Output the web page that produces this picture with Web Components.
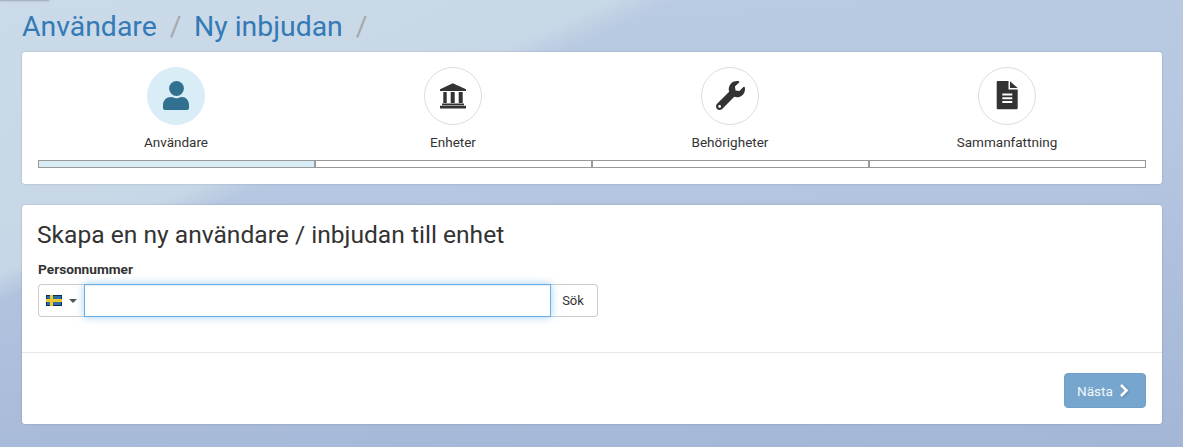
<!DOCTYPE html>
<html lang="sv">
<head>
<meta charset="utf-8">
<title>Ny inbjudan</title>
<style>
  html, body { margin: 0; height: 100%; }
  body {
    position: relative;
    width: 1183px;
    height: 447px;
    overflow: hidden;
    box-sizing: border-box;
    padding: 0 21px 0 22px;
    font-family: Roboto, "Liberation Sans", sans-serif;
    color: #333;
    background:
      linear-gradient(156deg, rgba(207,222,233,.8) 0, rgba(207,222,233,.7) 28%, rgba(207,222,233,0) 31%),
      linear-gradient(176deg, #bacbe3 0%, #b6c7e1 40%, #a3b6d6 100%);
  }
  /* edge of a hidden bar, peeks in at the top left */
  body::before {
    content: "";
    position: absolute;
    left: 0;
    top: 0;
    width: 49px;
    height: 1px;
    background: rgba(110, 120, 135, .4);
    box-shadow: 0 0 2px rgba(110, 120, 135, .5);
  }
</style>
</head>
<body>
<page-crumbs>
  <a>Användare</a>
  <a>Ny inbjudan</a>
</page-crumbs>

<page-card style="--pad: 15px 16px 16px 16px">
  <wizard-steps>
    <wizard-step label="Användare" active>
      <svg width="58" height="58" viewBox="0 0 58 58"><circle cx="29.5" cy="21.5" r="7.4" fill="currentColor"/><path d="M16 38.500c0-5.500 3.500-8.500 8-8.500 1.600 0 3 1.200 5.500 1.200S33.400 30 35 30c4 0 7 3 7 8.500V41c0 1.200-.8 2-2 2H18c-1.200 0-2-.8-2-2z" fill="currentColor"/></svg>
    </wizard-step>
    <wizard-step label="Enheter">
      <svg width="58" height="58" viewBox="0 0 58 58" fill="currentColor"><path d="M28.800 16.200 16 22.200V24h26v-1.800z"/><path d="M19.300 25h3.400v11h-3.400zM26.700 25h4v11h-4zM34.700 25h4v11h-4zM18 36.500h22v1.700H18zM16 38.800h26V41.500H16z"/></svg>
    </wizard-step>
    <wizard-step label="Behörigheter">
      <svg width="58" height="58" viewBox="0 0 58 58"><svg x="15" y="14" width="29" height="29" viewBox="0 0 512 512"><path fill="currentColor" d="M507.730 109.100c-2.240-9.030-13.540-12.090-20.120-5.510l-74.360 74.360-67.880-11.310-11.310-67.880 74.360-74.360c6.620-6.620 3.430-17.900-5.660-20.160-47.380-11.740-99.550.91-136.580 37.930-39.640 39.640-50.550 97.100-34.050 147.200L18.740 402.760c-24.990 24.990-24.990 65.510 0 90.500 24.990 24.990 65.510 24.990 90.500 0l213.210-213.210c50.120 16.710 107.470 5.680 147.370-34.220 37.070-37.070 49.700-89.320 37.910-136.730zM64 472c-13.250 0-24-10.750-24-24 0-13.260 10.750-24 24-24s24 10.740 24 24c0 13.250-10.750 24-24 24z"/></svg></svg>
    </wizard-step>
    <wizard-step label="Sammanfattning">
      <svg width="58" height="58" viewBox="0 0 58 58" fill="currentColor"><path fill-rule="evenodd" d="M20 14h10.500v8.500H39.700V41c0 .8-.5 1.300-1.300 1.300H20c-.8 0-1.300-.5-1.300-1.300V15.300c0-.8.5-1.300 1.300-1.300zM24.300 26.500v1.900h10v-1.900zM24.300 30.300v1.900h10v-1.900zM24.300 34v1.900h10V34z"/><path d="M32 14.200 39.700 21H32z"/></svg>
    </wizard-step>
  </wizard-steps>
</page-card>

<page-card style="--top: 21px">
  <invite-form></invite-form>
</page-card>

<script>
class PageCrumbs extends HTMLElement {
  constructor() {
    super();
    this.attachShadow({ mode: "open" });
    this.shadowRoot.innerHTML = `
      <style>
        :host {
          display: flex;
          align-items: center;
          height: 52px;
          font-size: 28.4px;
          color: #337ab7;
        }
        ::slotted(a)::after {
          content: "/";
          color: #a6a8aa;
          padding: 0 12.5px 0 13px;
        }
      </style>
      <slot></slot>
    `;
  }
}

class PageCard extends HTMLElement {
  constructor() {
    super();
    this.attachShadow({ mode: "open" });
    this.shadowRoot.innerHTML = `
      <style>
        :host {
          display: block;
          box-sizing: border-box;
          background: #fff;
          border-radius: 3px;
          box-shadow: 0 0 2px rgba(0, 0, 0, .22);
          padding: var(--pad, 0);
          margin-top: var(--top, 0);
        }
      </style>
      <slot></slot>
    `;
  }
}

class WizardSteps extends HTMLElement {
  constructor() {
    super();
    this.attachShadow({ mode: "open" });
    this.shadowRoot.innerHTML = `
      <style>
        :host {
          display: grid;
          grid-template-columns: repeat(4, 1fr);
        }
      </style>
      <slot></slot>
    `;
  }
}

class WizardStep extends HTMLElement {
  constructor() {
    super();
    this.attachShadow({ mode: "open" });
    this.shadowRoot.innerHTML = `
      <style>
        :host {
          display: flex;
          flex-direction: column;
          align-items: center;
          font-size: 13.5px;
          color: #333;
        }
        .dot {
          box-sizing: border-box;
          width: 58px;
          height: 58px;
          margin-left: -1px;
          border-radius: 50%;
          border: 1px solid #ddd;
          position: relative;
          color: #333;
        }
        ::slotted(svg) {
          position: absolute;
          left: -1px;
          top: -1px;
        }
        .label {
          margin-top: 7px;
          margin-left: -1px;
          height: 20px;
          line-height: 20px;
        }
        .bar {
          align-self: stretch;
          box-sizing: border-box;
          height: 8px;
          margin-top: 8px;
          border: 1px solid #999;
        }
        :host([active]) .dot {
          border-color: #d9edf7;
          background: #d9edf7;
          color: #31708f;
        }
        :host([active]) .bar { background: #d9edf7; }
      </style>
      <div class="dot"><slot></slot></div>
      <div class="label"></div>
      <div class="bar"></div>
    `;
    this.shadowRoot.querySelector(".label").textContent = this.getAttribute("label");
  }
}

class InviteForm extends HTMLElement {
  constructor() {
    super();
    this.attachShadow({ mode: "open" });
    this.shadowRoot.innerHTML = `
      <style>
        :host { display: block; }
        .body {
          padding: 15px 16px 0;
          height: 148px;
          box-sizing: border-box;
          border-bottom: 1px solid #e7e7e7;
        }
        h2 {
          margin: 0 0 0 -1px;
          font-size: 24.6px;
          font-weight: 400;
          line-height: 30px;
          color: #333;
        }
        label {
          display: block;
          margin-top: 10px;
          font-size: 13.7px;
          font-weight: 700;
          line-height: 18px;
          color: #333;
        }
        .group {
          display: flex;
          width: 560px;
          height: 33px;
          margin-top: 6px;
        }
        .flag {
          display: flex;
          align-items: center;
          gap: 7px;
          box-sizing: border-box;
          width: 46px;
          padding-left: 7px;
          border: 1px solid #ccc;
          border-right: 0;
          border-radius: 4px 0 0 4px;
        }
        .caret {
          width: 0;
          height: 0;
          border: 4px solid transparent;
          border-top-color: #555;
          border-bottom: 0;
        }
        input {
          flex: 1;
          min-width: 0;
          box-sizing: border-box;
          margin: 0;
          padding: 6px 12px;
          border: 1px solid #66afe9;
          outline: 0;
          background: #fff;
          box-shadow: inset 0 1px 1px rgba(0, 0, 0, .075), 0 0 8px rgba(102, 175, 233, .6);
          position: relative;
          z-index: 1;
        }
        .search {
          box-sizing: border-box;
          width: 47px;
          margin: 0;
          padding: 0 2px 0 0;
          border: 1px solid #ccc;
          border-left: 0;
          border-radius: 0 4px 4px 0;
          background: #fff;
          color: #333;
          font: inherit;
          font-size: 13px;
        }
        .foot {
          display: flex;
          justify-content: flex-end;
          padding: 20px 16px 16px;
        }
        .next {
          display: flex;
          align-items: center;
          gap: 6px;
          box-sizing: border-box;
          width: 82px;
          height: 35px;
          border: 1px solid #6fa0c9;
          border-radius: 4px;
          background: #76a5cd;
          color: #f3f7fa;
          font: inherit;
          font-size: 13.6px;
          margin: 0;
          padding: 0 0 0 12px;
        }
        .next svg { filter: drop-shadow(1px 1px 1px rgba(0, 0, 0, .2)); }
      </style>
      <div class="body">
        <h2>Skapa en ny användare / inbjudan till enhet</h2>
        <label for="pnr">Personnummer</label>
        <div class="group">
          <div class="flag">
            <svg width="16" height="11" viewBox="0 0 16 11"><rect width="16" height="11" fill="#0b2a5b"/><rect x="1" y="1" width="14" height="9" fill="#2a6ea6"/><rect x="0" y="4" width="16" height="3" fill="#f2c72e"/><rect x="4" y="0" width="3" height="11" fill="#f2c72e"/></svg>
            <span class="caret"></span>
          </div>
          <input id="pnr" type="text" aria-label="Personnummer">
          <button class="search" type="button">Sök</button>
        </div>
      </div>
      <div class="foot">
        <button class="next" type="button">Nästa
          <svg width="10" height="13" viewBox="0 0 10 13"><path d="M2 1 7.500 6.500 2 12" fill="none" stroke="#fff" stroke-width="2.600"/></svg>
        </button>
      </div>
    `;
  }
}

customElements.define("page-crumbs", PageCrumbs);
customElements.define("page-card", PageCard);
customElements.define("wizard-steps", WizardSteps);
customElements.define("wizard-step", WizardStep);
customElements.define("invite-form", InviteForm);
</script>
</body>
</html>
